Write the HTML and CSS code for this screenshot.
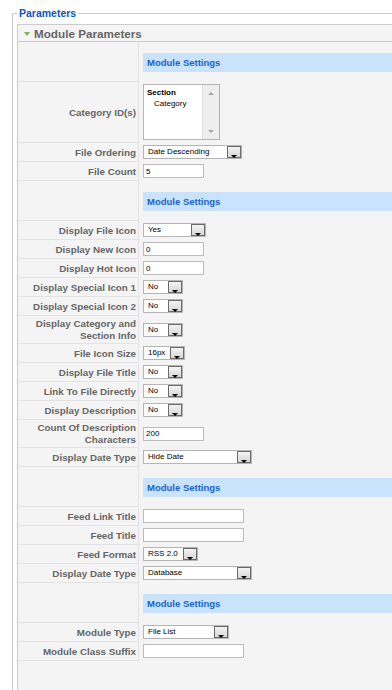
FILE: index.html
```html
<!DOCTYPE html>
<html lang="en">
<head>
    <meta charset="UTF-8">
    <title>Parameters</title>
    <link rel="stylesheet" href="styles.css">
</head>
<body>
    <fieldset class="params">
        <legend>Parameters</legend>
        <div class="panel">
            <h3 class="panel-title"><span class="toggle"></span>Module Parameters</h3>
            <table class="paramlist">
                <tr>
                    <td class="key"></td>
                    <td class="value spacer"><div class="band">Module Settings</div></td>
                </tr>
                <tr>
                    <td class="key">Category ID(s)</td>
                    <td class="value">
                        <div class="listbox">
                            <div class="list-items">
                                <div class="opt-group">Section</div>
                                <div class="opt">Category</div>
                            </div>
                            <div class="scroll">
                                <span class="arrow-up"></span>
                                <span class="arrow-down"></span>
                            </div>
                        </div>
                    </td>
                </tr>
                <tr>
                    <td class="key">File Ordering</td>
                    <td class="value"><div class="select w99"><span class="sel-text">Date Descending</span><span class="sel-btn"></span></div></td>
                </tr>
                <tr>
                    <td class="key">File Count</td>
                    <td class="value"><input class="text w61" type="text" value="5"></td>
                </tr>
                <tr>
                    <td class="key"></td>
                    <td class="value spacer"><div class="band">Module Settings</div></td>
                </tr>
                <tr>
                    <td class="key">Display File Icon</td>
                    <td class="value"><div class="select w63"><span class="sel-text">Yes</span><span class="sel-btn"></span></div></td>
                </tr>
                <tr>
                    <td class="key">Display New Icon</td>
                    <td class="value"><input class="text w61" type="text" value="0"></td>
                </tr>
                <tr>
                    <td class="key">Display Hot Icon</td>
                    <td class="value"><input class="text w61" type="text" value="0"></td>
                </tr>
                <tr>
                    <td class="key">Display Special Icon 1</td>
                    <td class="value"><div class="select w40"><span class="sel-text">No</span><span class="sel-btn"></span></div></td>
                </tr>
                <tr>
                    <td class="key">Display Special Icon 2</td>
                    <td class="value"><div class="select w40"><span class="sel-text">No</span><span class="sel-btn"></span></div></td>
                </tr>
                <tr>
                    <td class="key">Display Category and<br>Section Info</td>
                    <td class="value"><div class="select w40"><span class="sel-text">No</span><span class="sel-btn"></span></div></td>
                </tr>
                <tr>
                    <td class="key">File Icon Size</td>
                    <td class="value"><div class="select w42"><span class="sel-text">16px</span><span class="sel-btn"></span></div></td>
                </tr>
                <tr>
                    <td class="key">Display File Title</td>
                    <td class="value"><div class="select w40"><span class="sel-text">No</span><span class="sel-btn"></span></div></td>
                </tr>
                <tr>
                    <td class="key">Link To File Directly</td>
                    <td class="value"><div class="select w40"><span class="sel-text">No</span><span class="sel-btn"></span></div></td>
                </tr>
                <tr>
                    <td class="key">Display Description</td>
                    <td class="value"><div class="select w40"><span class="sel-text">No</span><span class="sel-btn"></span></div></td>
                </tr>
                <tr>
                    <td class="key">Count Of Description<br>Characters</td>
                    <td class="value"><input class="text w61" type="text" value="200"></td>
                </tr>
                <tr>
                    <td class="key">Display Date Type</td>
                    <td class="value"><div class="select w109"><span class="sel-text">Hide Date</span><span class="sel-btn"></span></div></td>
                </tr>
                <tr>
                    <td class="key"></td>
                    <td class="value spacer"><div class="band">Module Settings</div></td>
                </tr>
                <tr>
                    <td class="key">Feed Link Title</td>
                    <td class="value"><input class="text w101" type="text" value=""></td>
                </tr>
                <tr>
                    <td class="key">Feed Title</td>
                    <td class="value"><input class="text w101" type="text" value=""></td>
                </tr>
                <tr>
                    <td class="key">Feed Format</td>
                    <td class="value"><div class="select w55"><span class="sel-text">RSS 2.0</span><span class="sel-btn"></span></div></td>
                </tr>
                <tr>
                    <td class="key">Display Date Type</td>
                    <td class="value"><div class="select w109"><span class="sel-text">Database</span><span class="sel-btn"></span></div></td>
                </tr>
                <tr>
                    <td class="key"></td>
                    <td class="value spacer"><div class="band">Module Settings</div></td>
                </tr>
                <tr>
                    <td class="key">Module Type</td>
                    <td class="value"><div class="select w86"><span class="sel-text">File List</span><span class="sel-btn"></span></div></td>
                </tr>
                <tr>
                    <td class="key">Module Class Suffix</td>
                    <td class="value"><input class="text w101" type="text" value=""></td>
                </tr>
            </table>
        </div>
    </fieldset>
</body>
</html>
```

FILE: styles.css
```css
body {
    margin: 0;
    background: #fff;
    font-family: "Liberation Sans", Arial, sans-serif;
    overflow: hidden;
}
/* the panel runs on past the right edge in the original, so no right border */
.params {
    margin: 7px 0 0 12px;
    padding: 5px 0 0 4px;
    border: 1px solid #ccc;
    border-right: none;
    width: 375px;
    min-width: 0;
}
.params legend {
    padding: 0 2px;
    color: #0b55c4;
    font-size: 10.5px;
    font-weight: bold;
    line-height: 12px;
}
.panel {
    border: 1px solid #ccc;
    border-right: none;
    background: #f4f4f4;
    padding-bottom: 40px;
}
.panel-title {
    margin: 0;
    padding-left: 6px;
    display: flex;
    align-items: center;
    gap: 4px;
    height: 16px;
    border-bottom: 1px solid #ccc;
    color: #666;
    font-size: 11.7px;
    font-weight: bold;
}
.toggle {
    width: 0;
    height: 0;
    border-left: 3.5px solid transparent;
    border-right: 3.5px solid transparent;
    border-top: 4px solid #86b04f;
    margin-top: 1px;
}
.paramlist {
    width: 100%;
    border-spacing: 0;
}
.paramlist td {
    vertical-align: middle;
}
.paramlist .key {
    width: 115px;
    padding: 2px 2px 1px 3px;
    border-right: 1px solid #e3e3e3;
    border-bottom: 1px solid #e3e3e3;
    text-align: right;
    color: #666;
    font-size: 9.8px;
    font-weight: bold;
    line-height: 12px;
}
.paramlist .value {
    padding: 2px 4px 3px;
    line-height: 0;
}
.paramlist .value.spacer {
    padding: 11px 0 10px 4px;
}
.band {
    height: 19px;
    padding-left: 4px;
    background: #c9e3fd;
    color: #1a62cc;
    font-size: 9.5px;
    font-weight: bold;
    line-height: 19px;
}
.text {
    display: block;
    box-sizing: border-box;
    height: 14px;
    margin: 0;
    padding: 0 2px;
    border: 1px solid #bcbcbc;
    background: #fff;
    color: #000;
    font-family: "Liberation Sans", Arial, sans-serif;
    font-size: 8px;
    outline: none;
}
.select {
    display: flex;
    box-sizing: border-box;
    height: 14px;
    border: 1px solid #b5b5b5;
    background: #fff;
    align-items: center;
}
.sel-text {
    flex: 1;
    padding-left: 4px;
    color: #000;
    font-size: 8px;
    line-height: 12px;
    white-space: nowrap;
    overflow: hidden;
}
.sel-btn {
    position: relative;
    box-sizing: border-box;
    width: 14px;
    height: 12px;
    border: 1px solid #6a6a6a;
    background: linear-gradient(#f4f4f4, #d6d6d6);
}
.sel-btn::after {
    content: "";
    position: absolute;
    left: 3px;
    bottom: -1px;
    border-left: 3px solid transparent;
    border-right: 3px solid transparent;
    border-top: 3px solid #000;
}
.w40 { width: 40px; }
.w42 { width: 42px; }
.w55 { width: 55px; }
.w61 { width: 61px; }
.w63 { width: 63px; }
.w86 { width: 86px; }
.w99 { width: 99px; }
.w101 { width: 101px; }
.w109 { width: 109px; }
.listbox {
    display: flex;
    box-sizing: border-box;
    width: 77px;
    height: 56px;
    border: 1px solid #b5b5b5;
    background: #fff;
}
.list-items {
    flex: 1;
    padding: 2px 0 0 3px;
    color: #000;
    font-size: 8px;
    line-height: 11px;
}
.opt-group {
    font-weight: bold;
}
.opt {
    padding-left: 7px;
}
.scroll {
    width: 16px;
    border-left: 1px solid #e2e2e2;
    background: #eeeeee;
    display: flex;
    flex-direction: column;
    justify-content: space-between;
    align-items: center;
    padding: 7px 0 6px;
}
.arrow-up {
    border-left: 3.5px solid transparent;
    border-right: 3.5px solid transparent;
    border-bottom: 3px solid #a6a6a6;
}
.arrow-down {
    border-left: 3.5px solid transparent;
    border-right: 3.5px solid transparent;
    border-top: 3px solid #a6a6a6;
}
```
